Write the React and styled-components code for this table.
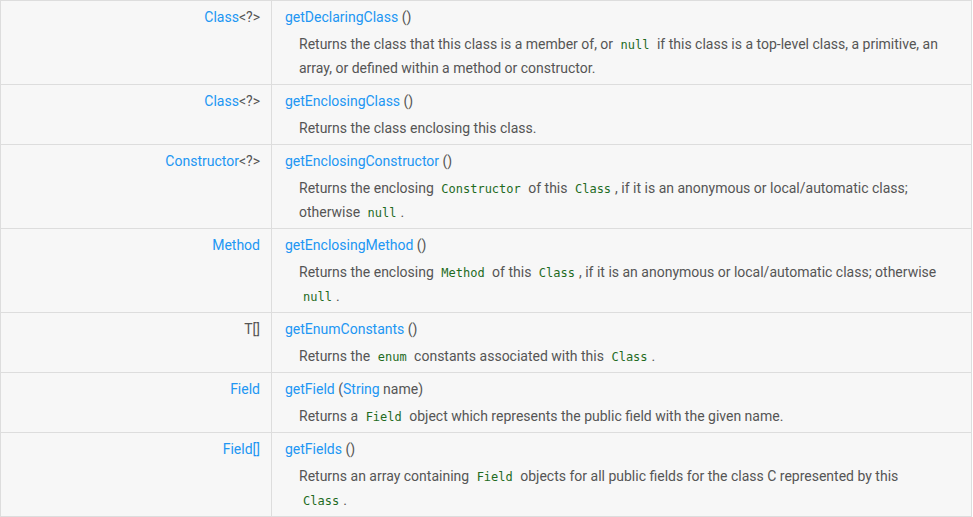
import React from 'react'
import styled, { createGlobalStyle } from 'styled-components'

const GlobalStyle = createGlobalStyle`
  body {
    margin: 0;
    background: #ffffff;
    font-family: Roboto, 'Liberation Sans', sans-serif;
  }
`

const methods = [
  {
    type: [{ link: 'Class' }, '<?>'],
    name: 'getDeclaringClass',
    params: [],
    desc: [
      'Returns the class that this class is a member of, or ',
      { code: 'null' },
      ' if this class is a top-level class, a primitive, an array, or defined within a method or constructor.',
    ],
  },
  {
    type: [{ link: 'Class' }, '<?>'],
    name: 'getEnclosingClass',
    params: [],
    desc: ['Returns the class enclosing this class.'],
  },
  {
    type: [{ link: 'Constructor' }, '<?>'],
    name: 'getEnclosingConstructor',
    params: [],
    desc: [
      'Returns the enclosing ',
      { code: 'Constructor' },
      ' of this ',
      { code: 'Class' },
      ', if it is an anonymous or local/automatic class; otherwise ',
      { code: 'null' },
      '.',
    ],
  },
  {
    type: [{ link: 'Method' }],
    name: 'getEnclosingMethod',
    params: [],
    desc: [
      'Returns the enclosing ',
      { code: 'Method' },
      ' of this ',
      { code: 'Class' },
      ', if it is an anonymous or local/automatic class; otherwise ',
      { code: 'null' },
      '.',
    ],
  },
  {
    type: ['T[]'],
    name: 'getEnumConstants',
    params: [],
    desc: [
      'Returns the ',
      { code: 'enum' },
      ' constants associated with this ',
      { code: 'Class' },
      '.',
    ],
  },
  {
    type: [{ link: 'Field' }],
    name: 'getField',
    params: [{ link: 'String' }, ' name'],
    desc: [
      'Returns a ',
      { code: 'Field' },
      ' object which represents the public field with the given name.',
    ],
  },
  {
    type: [{ link: 'Field[]' }],
    name: 'getFields',
    params: [],
    desc: [
      'Returns an array containing ',
      { code: 'Field' },
      ' objects for all public fields for the class C represented by this ',
      { code: 'Class' },
      '.',
    ],
  },
]

const renderParts = (parts) =>
  parts.map((part, i) => {
    if (typeof part === 'string') return <React.Fragment key={i}>{part}</React.Fragment>
    if (part.link) return <Link key={i}>{part.link}</Link>
    return <Code key={i}>{part.code}</Code>
  })

const App = () => {
  return (
    <>
      <GlobalStyle />
      <Table>
        {methods.map((m) => (
          <Row key={m.name}>
            <TypeCell>{renderParts(m.type)}</TypeCell>
            <MethodCell>
              <Signature>
                <Link>{m.name}</Link> ({renderParts(m.params)})
              </Signature>
              <Description>{renderParts(m.desc)}</Description>
            </MethodCell>
          </Row>
        ))}
      </Table>
    </>
  )
}

const Table = styled.div`
  width: 972px;
  box-sizing: border-box;
  border: 1px solid #dddddd;
  border-bottom: none;
  background: #f7f7f7;
  color: #555555;
  font-size: 14px;
`

const Row = styled.div`
  display: grid;
  grid-template-columns: 271px 1fr;
  border-bottom: 1px solid #dddddd;
`

const TypeCell = styled.div`
  text-align: right;
  padding: 4px 11px 4px 12px;
  line-height: 24px;
  border-right: 1px solid #dddddd;
`

const MethodCell = styled.div`
  padding: 4px 12px 4px 13px;
`

const Signature = styled.div`
  line-height: 24px;
`

const Description = styled.div`
  margin: 3px 15px 0 14px;
  line-height: 24px;
`

const Link = styled.span`
  color: #2196f3;
`

const Code = styled.code`
  font-family: 'DejaVu Sans Mono', 'Liberation Mono', monospace;
  font-size: 12px;
  line-height: 12px;
  color: #1e6b1e;
  padding: 0 4px;
`

export default App
